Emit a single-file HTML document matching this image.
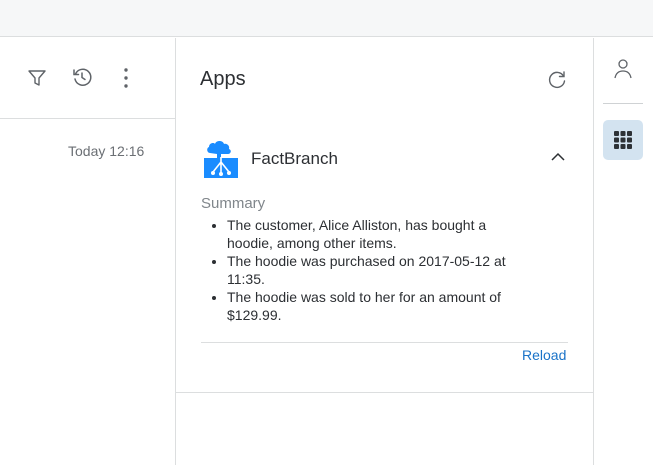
<!DOCTYPE html>
<html><head><style>
*{margin:0;padding:0;box-sizing:border-box}
body{width:653px;height:465px;background:#fff;font-family:"Liberation Sans",sans-serif;position:relative;overflow:hidden;color:#2c2f33}
.abs{position:absolute}
</style></head><body>
<div class="abs" style="left:0;top:0;width:653px;height:37px;background:#f6f7f8;border-bottom:1px solid #dcdedf"></div>
<div class="abs" style="left:175px;top:38px;width:1px;height:427px;background:#dcdedf"></div>
<div class="abs" style="left:593px;top:38px;width:1px;height:427px;background:#dcdedf"></div>
<div class="abs" style="left:0;top:118px;width:175px;height:1px;background:#dcdedf"></div>
<div class="abs" style="left:176px;top:392px;width:417px;height:1px;background:#dcdedf"></div>
<svg class="abs" style="left:26px;top:67px" width="22" height="22" viewBox="0 0 22 22" fill="none" stroke="#5f6368" stroke-width="1.4" stroke-linejoin="round"><path d="M3 4h16l-6 7v7l-4-2v-5z"/></svg>
<svg class="abs" style="left:71px;top:66px" width="22" height="22" viewBox="0 0 22 22" fill="none" stroke="#5f6368" stroke-width="1.5" stroke-linecap="round"><path d="M4.5 8A8 8 0 1 1 4 13"/><path d="M3 4v4.5h4.5"/><path d="M11 7v4.5l3 2"/></svg>
<svg class="abs" style="left:120px;top:67px" width="12" height="22" viewBox="0 0 12 22" fill="#5f6368"><circle cx="6" cy="3" r="1.7"/><circle cx="6" cy="11" r="1.7"/><circle cx="6" cy="19" r="1.7"/></svg>
<div class="abs" style="left:68px;top:143px;font-size:14px;color:#6b6f74">Today 12:16</div>
<div class="abs" style="left:200px;top:68px;font-size:20px;color:#2c2f33">Apps</div>
<svg class="abs" style="left:546px;top:69px" width="22" height="22" viewBox="0 0 22 22" fill="none" stroke="#5f6368" stroke-width="1.4" stroke-linecap="round"><path d="M17.5 7A7.5 7.5 0 1 0 18.5 12"/><path d="M18 3v4.5h-4.5"/></svg>
<svg class="abs" style="left:204px;top:137px" width="34" height="41" viewBox="0 0 34 41"><path fill="#1a8cff" d="M6 16c-3 0-4-5-1-6 0-4 5-5 6-3 1-4 8-4 9 0 3-1 6 2 5 5 3 1 2 5-1 5h-7v5h-4v-5z"/><rect x="0" y="21" width="34" height="20" fill="#1a8cff"/><g stroke="#fff" stroke-width="1.6" fill="none"><path d="M17 20v16M17 25l-8 10M17 25l8 10"/></g><g fill="#fff"><circle cx="9" cy="36" r="2"/><circle cx="17" cy="37" r="2"/><circle cx="25" cy="36" r="2"/></g></svg>
<div class="abs" style="left:251px;top:149px;font-size:17px;color:#2c2f33">FactBranch</div>
<svg class="abs" style="left:550px;top:151px" width="16" height="12" viewBox="0 0 16 12" fill="none" stroke="#2c2f33" stroke-width="1.5"><path d="M2 9l6-6 6 6"/></svg>
<div class="abs" style="left:201px;top:195px;font-size:15px;color:#80868b">Summary</div>
<ul class="abs" style="left:227px;top:216px;width:302px;font-size:14px;line-height:18px;color:#2c2f33;padding-left:0">
<li>The customer, Alice Alliston, has bought a hoodie, among other items.</li>
<li>The hoodie was purchased on 2017-05-12 at 11:35.</li>
<li>The hoodie was sold to her for an amount of $129.99.</li>
</ul>
<div class="abs" style="left:201px;top:342px;width:367px;height:1px;background:#dcdedf"></div>
<div class="abs" style="left:522px;top:347px;font-size:14px;color:#1a73c8">Reload</div>
<svg class="abs" style="left:612px;top:57px" width="22" height="24" viewBox="0 0 22 24" fill="none" stroke="#5f6368" stroke-width="1.3"><circle cx="11" cy="7" r="4"/><path d="M3 21c1-5 4-7 8-7s7 2 8 7"/></svg>
<div class="abs" style="left:603px;top:103px;width:40px;height:1px;background:#cfd2d4"></div>
<div class="abs" style="left:603px;top:120px;width:40px;height:40px;border-radius:5px;background:#d3e3f0"></div>
<svg class="abs" style="left:614px;top:131px" width="18" height="18" viewBox="0 0 18 18" fill="#2c3136"><rect x="0" y="0" width="5" height="5" rx="1"/><rect x="6.5" y="0" width="5" height="5" rx="1"/><rect x="13" y="0" width="5" height="5" rx="1"/><rect x="0" y="6.5" width="5" height="5" rx="1"/><rect x="6.5" y="6.5" width="5" height="5" rx="1"/><rect x="13" y="6.5" width="5" height="5" rx="1"/><rect x="0" y="13" width="5" height="5" rx="1"/><rect x="6.5" y="13" width="5" height="5" rx="1"/><rect x="13" y="13" width="5" height="5" rx="1"/></svg>
</body></html>
